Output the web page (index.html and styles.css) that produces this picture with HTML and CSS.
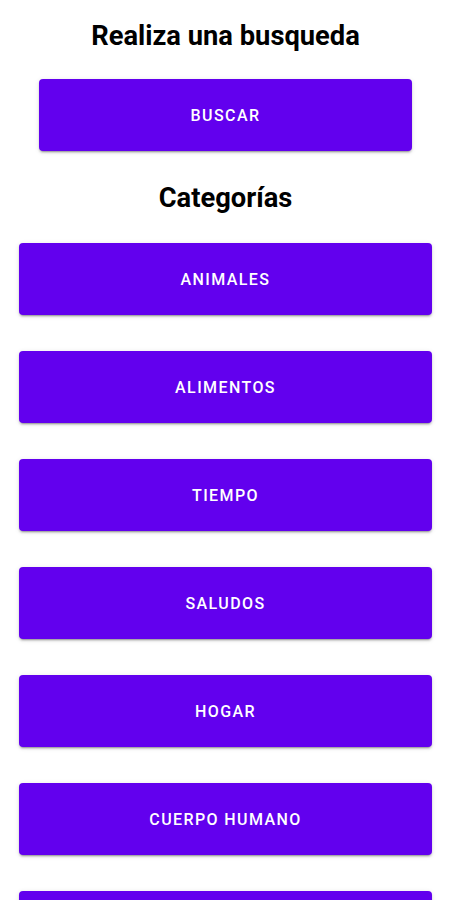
FILE: index.html
```html
<!DOCTYPE html>
<html lang="es">
<head>
    <meta charset="UTF-8">
    <title>Categorías</title>
    <link rel="stylesheet" href="styles.css">
</head>
<body>
    <div class="container">
        <h2 class="titulo">Realiza una busqueda</h2>
        <button class="btn btn-buscar">Buscar</button>

        <h2 class="titulo titulo-cat">Categorías</h2>
        <div class="categorias">
            <button class="btn">Animales</button>
            <button class="btn">Alimentos</button>
            <button class="btn">Tiempo</button>
            <button class="btn">Saludos</button>
            <button class="btn">Hogar</button>
            <button class="btn">Cuerpo humano</button>
            <button class="btn">Colores</button>
        </div>
    </div>
</body>
</html>
```

FILE: styles.css
```css
body { margin: 0; background: #ffffff; font-family: Roboto, "Liberation Sans", Arial, sans-serif; }
.container { padding: 21px 18px 0 19px; display: flex; flex-direction: column; }
.titulo { margin: 0; font-size: 27.3px; line-height: 30px; font-weight: 700; color: #000; text-align: center; }
.titulo-cat { margin-top: 32px; }
.btn { height: 72px; border: none; border-radius: 4px; background: #6200ee; color: #fff; font-family: inherit; font-size: 16px; font-weight: 500; letter-spacing: 1.4px; text-transform: uppercase; cursor: pointer; box-shadow: 0 3px 1px -2px rgba(0,0,0,0.2), 0 2px 2px 0 rgba(0,0,0,0.14), 0 1px 5px 0 rgba(0,0,0,0.12); }
.btn-buscar { margin: 28px 20px 0 20px; }
.categorias { margin-top: 30px; display: flex; flex-direction: column; gap: 36px; }
```
